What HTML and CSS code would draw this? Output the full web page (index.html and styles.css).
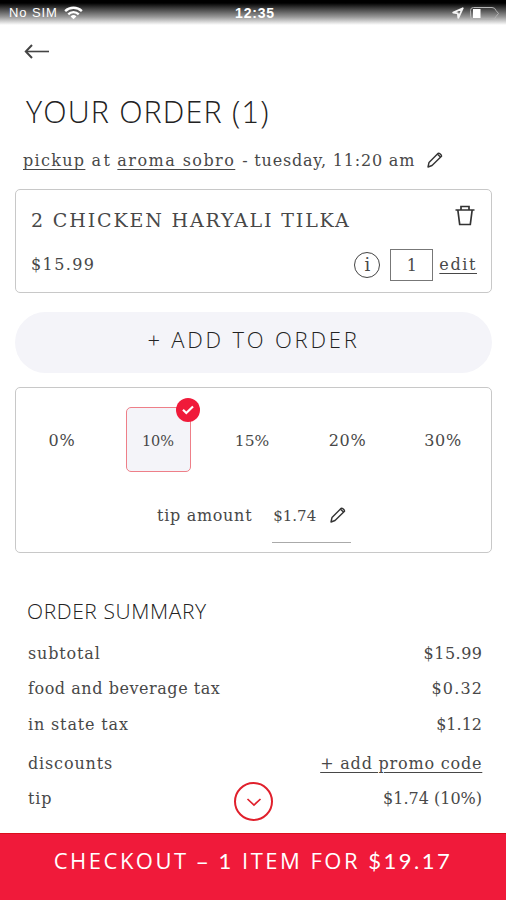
FILE: index.html
```html
<!DOCTYPE html>
<html lang="en">
<head>
<meta charset="utf-8">
<title>Your order</title>
<link rel="stylesheet" href="styles.css">
</head>
<body>
<div class="screen">
  <div class="status">
    <div class="carrier">
      <span>No SIM</span>
      <svg width="19" height="14" viewBox="0 0 20 14" fill="none" stroke="#fff" stroke-width="2.5"><path d="M1.2 5.1a12.6 12.6 0 0 1 17.6 0"/><path d="M4.5 8.4a7.8 7.8 0 0 1 11 0"/><path d="M10 13.6 6.9 10.6a4.4 4.4 0 0 1 6.2 0z" fill="#fff" stroke="none"/></svg>
    </div>
    <div class="clock">12:35</div>
    <div class="indicators">
      <svg width="12" height="12" viewBox="0 0 12 12" fill="none" stroke="#f4f4f4" stroke-width="1.8" stroke-linejoin="round"><path d="M10.8 1.2 1.2 5.6l4.6.7.5 4.6z"/></svg>
      <svg width="30" height="13" viewBox="0 0 30 13"><path d="M22 .5H3.500A3 3 0 0 0 .5 3.500v6a3 3 0 0 0 3 3H22q3 0 4-3l2.500-3-2.500-3q-1-3-4-3z" fill="none" stroke="#b4b4b4"/><rect x="3" y="2" width="7.500" height="9" fill="#fff"/></svg>
    </div>
  </div>

  <div class="nav">
    <svg width="26" height="16" viewBox="0 0 26 16" fill="none" stroke="#444" stroke-width="1.600"><path d="M25 8.500H2"/><path d="M8 2 1.800 8.500 8 15" stroke-width="2"/></svg>
  </div>

  <h1 class="title">YOUR ORDER (<span class="num">1</span>)</h1>

  <div class="pickup">
    <a class="pickup-type">pickup</a><span class="pickup-at">at</span><a class="pickup-place">aroma sobro</a><span class="pickup-time">- tuesday, 11:20 am</span>
    <svg class="pencil" width="16" height="16" viewBox="0 0 16 16" fill="none" stroke="#333" stroke-width="1.400" stroke-linejoin="round"><path d="M1 15l1-4.500L11.200 1.300c.8-.6 3.800 1.800 3.300 3L5 13.500z"/><path d="M10.500 2.200l3.200 3"/></svg>
  </div>

  <section class="card item">
    <div class="item-row">
      <div class="item-name">2 CHICKEN HARYALI TILKA</div>
      <svg width="20" height="21" viewBox="0 0 20 21" fill="none" stroke="#333" stroke-width="1.700"><path d="M.5 5h19M6 5V1.500h8V5M2.900 5.500 4.700 19.500h10.600L17.100 5.500"/></svg>
    </div>
    <div class="item-row">
      <div class="item-price">$15.99</div>
      <div class="item-tools">
        <div class="info">i</div>
        <div class="qty">1</div>
        <a class="edit">edit</a>
      </div>
    </div>
  </section>

  <div class="add">+ ADD TO ORDER</div>

  <section class="card tips">
    <div class="tip-options">
      <div class="tip">0%</div>
      <div class="tip selected">10%
        <span class="badge"><svg width="14" height="12" viewBox="0 0 14 12" fill="none" stroke="#fff" stroke-width="2.200"><path d="M2 5.800 5.300 9 12 2.500"/></svg></span>
      </div>
      <div class="tip narrow">15%</div>
      <div class="tip">20%</div>
      <div class="tip">30%</div>
    </div>
    <div class="tip-amount">
      <span class="tip-label">tip amount</span>
      <div class="tip-field"><span>$1.74</span>
        <svg width="16" height="16" viewBox="0 0 16 16" fill="none" stroke="#333" stroke-width="1.400" stroke-linejoin="round"><path d="M1 15l1-4.500L11.200 1.300c.8-.6 3.800 1.800 3.300 3L5 13.500z"/><path d="M10.500 2.200l3.200 3"/></svg>
      </div>
    </div>
  </section>

  <h2 class="summary-title">ORDER SUMMARY</h2>
  <div class="summary">
    <div class="line"><span class="label roomy">subtotal</span><span class="wide">$15.99</span></div>
    <div class="line"><span class="label">food and beverage tax</span><span class="wider">$0.32</span></div>
    <div class="line"><span class="label roomy">in state tax</span><span>$1.12</span></div>
    <div class="line"><span class="label roomy">discounts</span><a class="promo">+ add promo code</a></div>
    <div class="line"><span class="label roomy">tip</span><span>$1.74 (10%)</span></div>
    <div class="more"><svg width="18" height="12" viewBox="0 0 18 12" fill="none" stroke="#e0202c" stroke-width="1.700"><path d="M2.500 3 9 9l6.500-6"/></svg></div>
  </div>

  <div class="checkout">CHECKOUT – <span class="num">1</span> ITEM FOR <span class="num">$19.17</span></div>
</div>
</body>
</html>
```
FILE: styles.css
```css
* { box-sizing: border-box; }
body {
  margin: 0;
  background: #fff;
  color: #484848;
  font: 16px/20px "DejaVu Serif", serif;
}
.screen {
  width: 506px;
  height: 900px;
  display: flex;
  flex-direction: column;
  overflow: hidden;
  white-space: nowrap;
}
.status {
  flex: none;
  height: 25px;
  display: grid;
  grid-template-columns: 1fr auto 1fr;
  align-items: center;
  padding: 1px 6px 0 9px;
  background: linear-gradient(#000 0, #000 3px, #444 9px, #999 17px, #fff 25px);
  color: #fff;
  font: 13px/22px "Liberation Sans", sans-serif;
}
.carrier, .indicators { display: flex; align-items: center; }
.carrier { gap: 6px; letter-spacing: .9px; }
.clock { margin-right: -1px; font-weight: bold; font-size: 14px; letter-spacing: .8px; }
.indicators { justify-content: flex-end; gap: 6px; }
.nav { height: 54px; padding: 18px 0 0 24px; }
.nav svg { display: block; }
.title {
  margin: 12px 0 0 26px;
  font: 300 30.500px/40px "Open Sans", sans-serif;
  letter-spacing: 1.150px;
  color: #222;
}
.num { font-family: Lato, sans-serif; }
.pickup {
  height: 30px;
  margin: 14px 0 0 23px;
  padding-top: 6px;
  display: flex;
  letter-spacing: 1.300px;
}
a { text-decoration: underline; text-underline-offset: 3px; text-decoration-thickness: 1px; }
.pickup-at { margin: 0 5px 0 6px; letter-spacing: 2.500px; }
.pickup-place { letter-spacing: 1.450px; }
.pickup-time { margin-left: 7px; letter-spacing: .800px; }
.pencil { margin: 1px 0 0 12px; }
.card {
  margin: 0 14px 0 15px;
  border: 1.500px solid #c8c8c8;
  border-radius: 5px;
}
.item { height: 104px; margin-top: 14px; padding: 15px 14px 0 15px; }
.item-row { display: flex; justify-content: space-between; align-items: center; }
.item-name { font-size: 19px; line-height: 32px; letter-spacing: 1.850px; }
.item-row:first-child { height: 30px; }
.item-row:first-child svg { margin: -9px 2px 0 0; }
.item-row:last-child { height: 34px; margin-top: 13px; }
.item-price { letter-spacing: 1.400px; }
.item-tools { display: flex; align-items: center; }
.info {
  width: 26px;
  height: 26px;
  border: 1.500px solid #444;
  border-radius: 50%;
  font-size: 18px;
  line-height: 23px;
  text-align: center;
}
.qty {
  width: 43px;
  height: 32px;
  margin: 0 6px 0 10px;
  border: 1.500px solid #777;
  line-height: 32px;
  text-align: center;
}
.edit { letter-spacing: 1.600px; }
.add {
  height: 61px;
  margin: 19px 14px 0 15px;
  border-radius: 31px;
  background: #f4f4f9;
  font: 300 22px/54px "Open Sans", sans-serif;
  letter-spacing: 2.800px;
  text-align: center;
  color: #222;
}
.tips { height: 166px; margin-top: 14px; }
.tip-options { display: flex; justify-content: space-between; padding: 19px 15px 0 13px; }
.tip {
  position: relative;
  width: 66px;
  height: 65px;
  line-height: 68px;
  text-align: center;
  letter-spacing: .7px;
}
.narrow { font-size: 15.500px; letter-spacing: 0; }
.selected {
  left: 1px;
  width: 65px;
  border: 1.500px solid #ee7f88;
  border-radius: 5px;
  background: #f4f4f9;
  font-size: 14.500px;
  line-height: 66px;
  letter-spacing: 0;
}
.badge {
  position: absolute;
  top: -10px;
  right: -10px;
  width: 24px;
  height: 24px;
  border-radius: 50%;
  background: #f01a3a;
  display: flex;
  align-items: center;
  justify-content: center;
}
.tip-amount { display: flex; margin: 28px 0 0 141px; }
.tip-label { margin: 6px 20px 0 0; letter-spacing: .7px; }
.tip-field {
  width: 79px;
  height: 43px;
  padding: 6px 5px 0 1px;
  display: flex;
  justify-content: space-between;
  border-bottom: 1px solid #aaa;
  font-size: 15px;
}
.tip-field svg { margin-top: 1px; }
.summary-title {
  margin: 44px 0 0 27px;
  font: 300 21px/28px "Open Sans", sans-serif;
  letter-spacing: .6px;
  color: #222;
}
.summary {
  position: relative;
  margin: 11px 24px 0 28px;
  height: 197px;
  display: grid;
  grid-template-rows: 35px 35px 37px 41px 30px;
}
.line { display: flex; justify-content: space-between; align-items: center; }
.label { letter-spacing: .550px; }
.roomy { letter-spacing: .850px; }
.wide { letter-spacing: .500px; margin-right: -.5px; }
.wider { letter-spacing: 1.200px; margin-right: -1.200px; }
.promo { letter-spacing: .800px; margin-right: -.3px; }
.more {
  position: absolute;
  left: 206px;
  top: 146px;
  width: 39px;
  height: 39px;
  border: 2px solid #e0202c;
  border-radius: 50%;
  display: flex;
  align-items: center;
  justify-content: center;
}
.checkout {
  flex: 1;
  border-top: 1px solid #d9101c;
  background: #f01a3a;
  color: #fff;
  font: 400 22px/53px "Open Sans", sans-serif;
  letter-spacing: 2.500px;
  text-align: center;
}
```
